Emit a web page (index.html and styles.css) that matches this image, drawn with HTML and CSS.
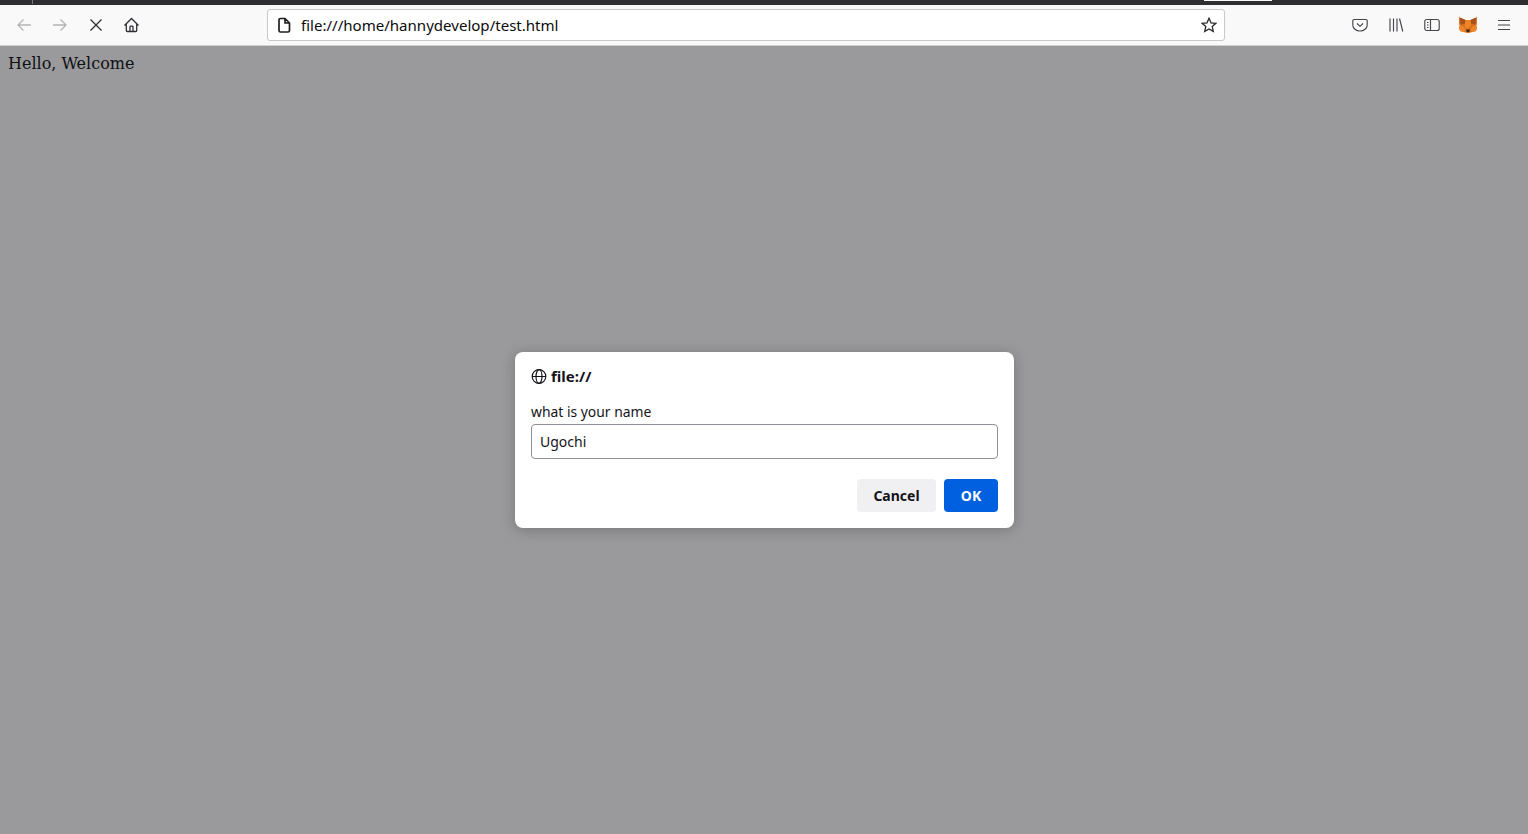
FILE: index.html
```html
<!DOCTYPE html>
<html lang="en">
<head>
<meta charset="utf-8">
<title>file:///home/hannydevelop/test.html</title>
<link rel="stylesheet" href="styles.css">
</head>
<body>
<div class="tabstrip"><span class="tab-sep"></span><span class="tab-active"></span></div>
<header class="toolbar">
  <div class="nav">
    <button class="tb dim"><svg viewBox="0 0 16 16"><path d="M15 8H2M7.500 2.500 2 8l5.500 5.500"/></svg></button>
    <button class="tb dim"><svg viewBox="0 0 16 16"><path d="M1 8h13M8.500 2.500 14 8l-5.500 5.500"/></svg></button>
    <button class="tb"><svg viewBox="0 0 16 16"><path d="M2.500 2.500l11 11M13.500 2.500l-11 11"/></svg></button>
    <button class="tb home"><svg viewBox="0 0 16 16"><path d="M1 8.500 8 1.500l7 7M2.800 7v6.500a1 1 0 0 0 1 1h8.400a1 1 0 0 0 1-1V7M6.500 14.500V10a.8.8 0 0 1 .8-.8h1.400a.8.8 0 0 1 .8.8v4.500"/></svg></button>
  </div>
  <div class="urlbar">
    <svg class="page-icon" viewBox="0 0 16 16"><path d="M3 3a1.500 1.500 0 0 1 1.500-1.500H9L13.500 6v7.500A1.500 1.500 0 0 1 12 15H4.500A1.500 1.500 0 0 1 3 13.500zM9 1.500V6h4.500" /></svg>
    <span class="url">file:///home/hannydevelop/test.html</span>
    <svg class="star" viewBox="0 0 16 16"><path d="M8 1.300l2 4.500 4.900.5-3.700 3.200 1.100 4.900L8 12l-4.300 2.400 1.100-4.900L1.100 6.300 6 5.800z"/></svg>
  </div>
  <div class="tools">
    <button class="tb light"><svg viewBox="0 0 16 16"><path d="M2 2.500h12A1.200 1.200 0 0 1 15.200 3.700V8A7.200 6 0 0 1 .8 8V3.700A1.200 1.200 0 0 1 2 2.500zM5 6.500l3 2.800 3-2.800"/></svg></button>
    <button class="tb light"><svg viewBox="0 0 16 16"><path d="M2 1.500v13M5.500 1.500v13M9 1.500v13M11.500 1.500l3.300 13"/></svg></button>
    <button class="tb light"><svg viewBox="0 0 16 16"><rect x=".8" y="2.500" width="14.400" height="11" rx="2"/><path d="M6.500 2.500v11M3 5.500h1.500M3 8h1.500M3 10.500h1.500"/></svg></button>
    <button class="tb"><svg class="fox" viewBox="0 0 18 16"><path class="f1" d="M.3.300 6.500 3h5L17.700.300 18 6l-.5 3 .5 2-1 3-3.500 1-2 .5-1.500.5H8l-1.500-.5-2-.5L1 14l-1-3 .5-2L0 6z"/><path class="f2" d="M6.500 3h5l.8 4-2.800 4.500h-3L5.700 7zM1 8l4 2 1.500 3.500-2 1.500L1 14zM17 8l-4 2-1.500 3.500 2 1.500 3.500-1z"/><path class="f3" d="M.3.300 6.500 3l-.8 4-4 .5zM17.700.300 11.500 3l.8 4 4 .5z"/><path class="f4" d="M7 12.500h4l-.8 2.500H7.800z"/></svg></button>
    <button class="tb light"><svg viewBox="0 0 16 16"><path d="M2 3.500h12M2 8h12M2 12.500h12"/></svg></button>
  </div>
</header>
<main class="page">
  <p class="greeting">Hello, Welcome</p>
  <div class="overlay">
    <div class="dialog">
      <div class="origin">
        <svg viewBox="0 0 16 16"><circle cx="8" cy="8" r="6.800"/><ellipse cx="8" cy="8" rx="3" ry="6.800"/><path d="M1.200 8h13.600"/></svg>
        <span>file://</span>
      </div>
      <div class="msg">what is your name</div>
      <div class="input">Ugochi</div>
      <div class="actions">
        <button class="btn cancel">Cancel</button>
        <button class="btn ok">OK</button>
      </div>
    </div>
  </div>
</main>
</body>
</html>
```
FILE: styles.css
```css
* { box-sizing: border-box; }
html, body { height: 100%; }
body {
  margin: 0;
  display: flex;
  flex-direction: column;
  overflow: hidden;
  font-family: "Noto Sans", sans-serif;
  background: #9a9a9c;
}
button { font-family: inherit; border: 0; padding: 0; background: none; }
.tabstrip {
  height: 5px;
  background: #2e2d31;
  position: relative;
  flex: none;
}
.tab-sep { position: absolute; left: 32px; top: 0; width: 1px; height: 4px; background: #77767a; }
.tab-active { position: absolute; left: 1204px; top: 0; width: 68px; height: 1px; background: #f9f9fa; }
.toolbar {
  height: 41px;
  flex: none;
  display: flex;
  align-items: flex-start;
  background: #f9f9fa;
  border-bottom: 1px solid #cfcfd0;
  color: #38383d;
}
.nav { display: flex; gap: 4px; padding: 4px 0 0 8px; width: 267px; flex: none; }
.tb { width: 32px; height: 32px; display: flex; align-items: center; justify-content: center; flex: none; }
.tb svg { width: 16px; height: 16px; fill: none; stroke: #2f2f33; stroke-width: 1.300; }
.tb.dim svg { stroke: #b4b4b6; }
.tb.light svg { stroke: #46464b; stroke-width: 1.150; }
.home { transform: translateX(-.5px); }
.urlbar {
  width: 958px;
  height: 32px;
  margin-top: 4px;
  flex: none;
  display: flex;
  align-items: center;
  background: #fff;
  border: 1px solid #c8c8cb;
  border-radius: 3px;
  padding: 0 7px 0 8px;
}
.page-icon { width: 16px; height: 16px; fill: none; stroke: #1f1f22; stroke-width: 1.700; flex: none; }
.url { margin-left: 9px; flex: 1; font-size: 15.060px; color: #0c0c0d; line-height: 20px; }
.star { width: 16px; height: 16px; fill: none; stroke: #2a2a2e; stroke-width: 1.300; flex: none; }
.tools { display: flex; gap: 4px; padding: 4px 0 0 119px; }
.tools .fox { width: 18px; stroke: none; }
.f1 { fill: #d9701e; stroke: none; }
.f2 { fill: #ee8526; stroke: none; }
.f3 { fill: #a8531a; stroke: none; }
.f4 { fill: #33261c; stroke: none; }
.page { flex: 1; position: relative; }
.greeting {
  margin: 0;
  padding: 8px 8px 0;
  font-family: "DejaVu Serif", serif;
  font-size: 16px;
  line-height: 19px;
  color: #101012;
}
.overlay {
  position: absolute;
  inset: 0;
  display: flex;
  justify-content: center;
  padding: 306px 0 0 1px;
}
.dialog {
  width: 499px;
  height: 176px;
  background: #fff;
  border-radius: 8px;
  padding: 15px 16px;
  box-shadow: 0 2px 14px rgba(20, 20, 25, 0.25);
  color: #15141a;
}
.origin { display: flex; align-items: center; gap: 4px; height: 18px; font-size: 15px; font-weight: 700; }
.origin svg { width: 16px; height: 16px; fill: none; stroke: #15141a; stroke-width: 1.200; transform: translateY(.5px); }
.msg { margin-top: 17px; font-size: 13.900px; line-height: 19px; }
.input {
  height: 35px;
  margin-top: 3px;
  border: 1px solid #8f8f9d;
  border-radius: 4px;
  padding: 0 8px;
  font-size: 14px;
  line-height: 33px;
}
.actions { display: flex; justify-content: flex-end; gap: 8px; margin-top: 20px; }
.btn { height: 33px; border-radius: 4px; font-size: 14px; font-weight: 700; }
.cancel { width: 79px; background: #f0f0f2; color: #15141a; }
.ok { width: 54px; background: #0060df; color: #fff; }
```
